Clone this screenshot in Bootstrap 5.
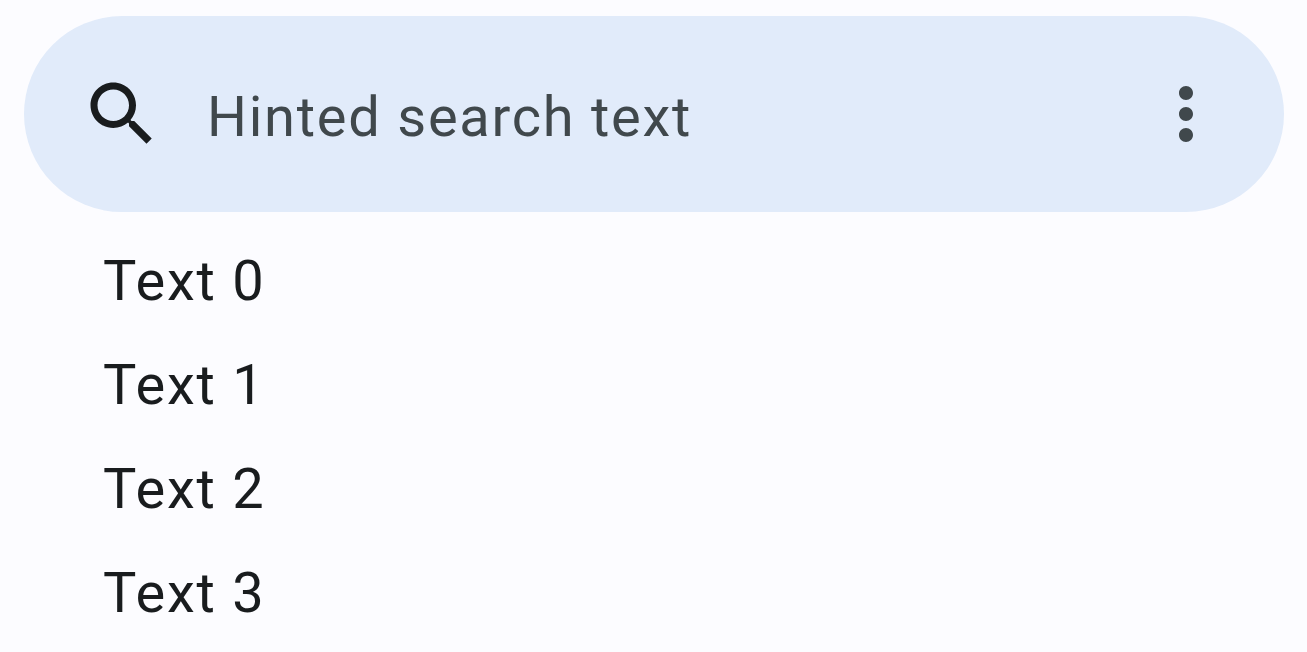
<!DOCTYPE html>
<html lang="en">
<head>
<meta charset="utf-8">
<meta name="viewport" content="width=device-width, initial-scale=1">
<title>Search</title>
<link href="https://cdn.jsdelivr.net/npm/bootstrap@5.3.0/dist/css/bootstrap.min.css" rel="stylesheet">
<style>
  body {
    background: #fcfcff;
    color: #191c1e;
    font-family: Roboto, sans-serif;
    font-size: 56px;
    line-height: 84px;
    letter-spacing: .03125em;
    overflow-x: hidden;
  }
  .search-bar {
    height: 196px;
    margin: 16px 23px 0 24px;
    padding: 0 56px;
    background: #e1ebfa;
  }
  .search-icon { width: 84px; height: 84px; }
  .search-input,
  .search-input:focus {
    color: #40484c;
    font-size: inherit;
    line-height: inherit;
    letter-spacing: inherit;
    margin-left: 43px;
    padding: 6px 0 0;
  }
  .search-input::placeholder { color: #40484c; opacity: 1; }
  .result-list { padding: 17px 56px 0 103px; }
  .result-list li + li { padding-top: 20px; }
  .result-list li:first-child { padding-top: 10px; }
</style>
</head>
<body>
<form class="search-bar d-flex align-items-center rounded-pill" role="search">
  <label for="query" class="flex-shrink-0 d-flex">
    <svg class="search-icon" viewBox="0 0 24 24" fill="#191c1e" role="img" aria-label="Search"><path d="M15.500 14h-.79l-.28-.27C15.410 12.590 16 11.110 16 9.500 16 5.910 13.090 3 9.500 3S3 5.910 3 9.500 5.910 16 9.500 16c1.610 0 3.090-.59 4.230-1.570l.27.28v.79l5 4.990L20.490 19l-4.990-5zm-6 0C7.010 14 5 11.990 5 9.500S7.010 5 9.500 5 14 7.010 14 9.500 11.990 14 9.500 14z"/></svg>
  </label>
  <input id="query" type="text" class="search-input form-control border-0 bg-transparent shadow-none" placeholder="Hinted search text">
  <button type="button" class="btn border-0 p-0 d-flex flex-shrink-0" aria-label="More options">
    <svg class="search-icon" viewBox="0 0 24 24" fill="#40484c" aria-hidden="true"><path d="M12 8c1.100 0 2-.9 2-2s-.9-2-2-2-2 .9-2 2 .9 2 2 2zm0 2c-1.100 0-2 .9-2 2s.9 2 2 2 2-.9 2-2-.9-2-2-2zm0 6c-1.100 0-2 .9-2 2s.9 2 2 2 2-.9 2-2-.9-2-2-2z"/></svg>
  </button>
</form>
<ul class="result-list list-unstyled mb-0">
  <li>Text 0</li>
  <li>Text 1</li>
  <li>Text 2</li>
  <li>Text 3</li>
</ul>
<script src="https://cdn.jsdelivr.net/npm/bootstrap@5.3.0/dist/js/bootstrap.bundle.min.js"></script>
</body>
</html>
